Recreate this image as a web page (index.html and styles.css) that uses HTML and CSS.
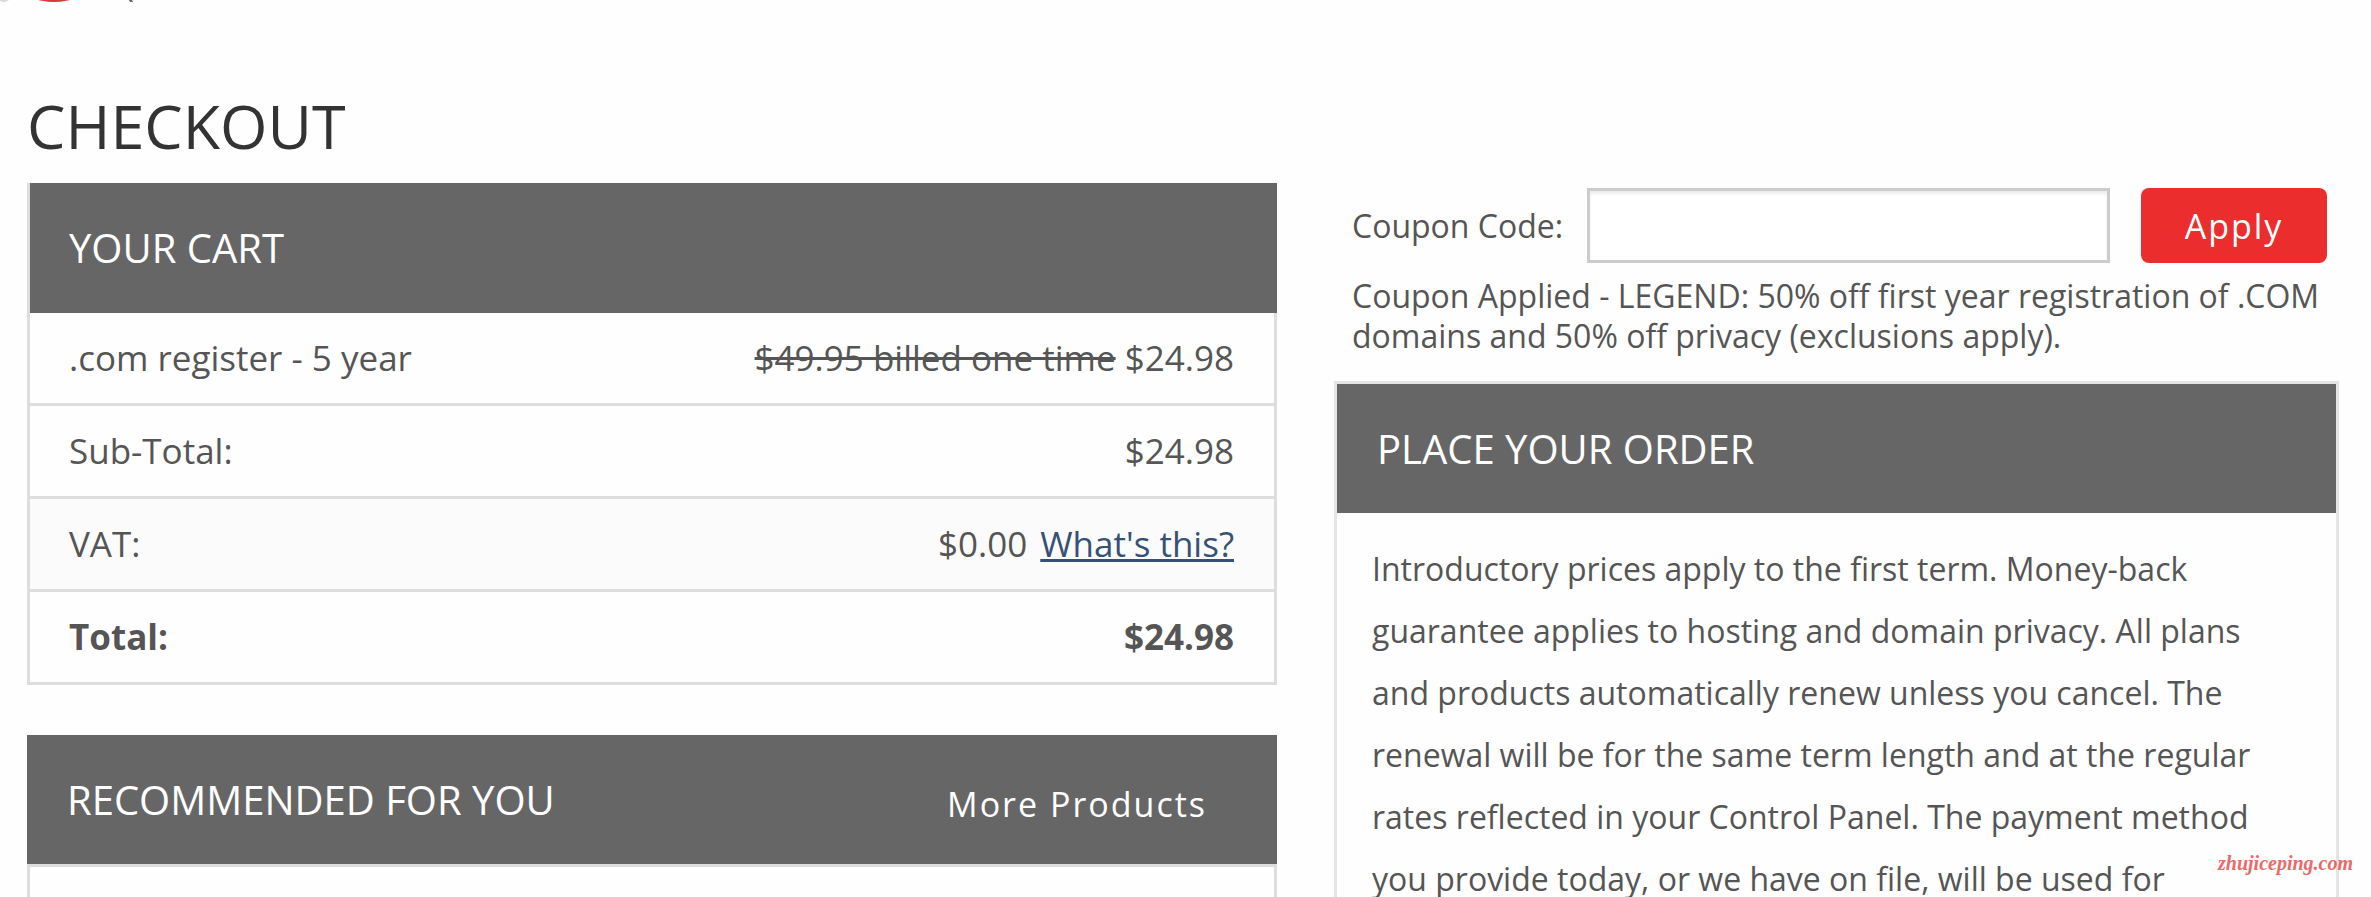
FILE: index.html
```html
<!DOCTYPE html>
<html lang="en">
<head>
<meta charset="utf-8">
<title>Checkout</title>
<link rel="stylesheet" href="styles.css">
</head>
<body>
<header class="site-header">
  <svg class="brand" width="140" height="16" viewBox="0 0 140 16" aria-hidden="true">
    <ellipse cx="4" cy="-3" rx="6" ry="5" fill="#d8d8d8"/>
    <ellipse cx="54" cy="-14" rx="32" ry="16" fill="#d9383d"/>
    <path d="M129 0h3l1 2h-3z" fill="#666"/>
  </svg>
</header>
<main class="page">
  <h1 class="title">CHECKOUT</h1>
  <div class="columns">
    <div class="main-column">
      <section class="cart">
        <h2 class="bar cart-bar">YOUR CART</h2>
        <table class="cart-table">
          <tbody>
            <tr><th scope="row">.com register - 5 year</th><td><s>$49.95 billed one time</s> $24.98</td></tr>
            <tr><th scope="row">Sub-Total:</th><td>$24.98</td></tr>
            <tr class="tinted"><th scope="row">VAT:</th><td>$0.00 <a class="help" href="#vat">What's this?</a></td></tr>
            <tr class="total"><th scope="row">Total:</th><td>$24.98</td></tr>
          </tbody>
        </table>
      </section>
      <section class="recommended">
        <div class="bar recommended-bar">
          <h2 class="bar-title">RECOMMENDED FOR YOU</h2>
          <a class="more" href="#products">More Products</a>
        </div>
        <div class="recommended-body"></div>
      </section>
    </div>
    <aside class="side-column">
      <form class="coupon">
        <div class="coupon-row">
          <label for="coupon">Coupon Code:</label>
          <input class="coupon-input" id="coupon" type="text">
          <button class="apply" type="button">Apply</button>
        </div>
        <p class="coupon-note">Coupon Applied - LEGEND: 50% off first year registration of .COM domains and 50% off privacy (exclusions apply).</p>
      </form>
      <section class="order">
        <h2 class="bar">PLACE YOUR ORDER</h2>
        <p class="terms">Introductory prices apply to the first term. Money-back guarantee applies to hosting and domain privacy. All plans and products automatically renew unless you cancel. The renewal will be for the same term length and at the regular rates reflected in your Control Panel. The payment method you provide today, or we have on file, will be used for</p>
      </section>
    </aside>
  </div>
</main>
<div class="watermark">zhujiceping.com</div>
</body>
</html>
```
FILE: styles.css
```css
* { box-sizing: border-box; }
body {
  margin: 0;
  height: 100vh;
  overflow: hidden;
  background: #fefefe;
  color: #555;
  font-family: "Open Sans", "Noto Sans", sans-serif;
  font-size: 35px;
}
.site-header { height: 84px; }
.brand { display: block; }
.page { padding: 0 32px 0 27px; }
.title {
  margin: 0 0 15px;
  font-size: 61px;
  font-weight: 400;
  line-height: 84px;
  color: #333;
}
.columns {
  display: grid;
  grid-template-columns: 1250fr 1005fr;
  column-gap: 57px;
  align-items: start;
}
.bar {
  margin: 0;
  padding: 0 40px;
  background: #666;
  color: #fff;
  font-size: 40px;
  font-weight: 400;
  line-height: 129px;
}
.cart {
  margin-bottom: 50px;
  border: 3px solid #ddd;
  border-top: 0;
}
.cart-bar { margin-right: -3px; padding: 0 39px; line-height: 130px; }
.cart-table { width: 100%; border-collapse: separate; border-spacing: 0; }
.cart-table th,
.cart-table td {
  height: 93px;
  padding: 0 40px 2px 39px;
  border-bottom: 3px solid #ddd;
  font-weight: 400;
  text-align: left;
}
.cart-table td { text-align: right; }
.cart-table .tinted { background: #fbfbfb; }
.cart-table .total th,
.cart-table .total td { height: 90px; border-bottom: 0; font-weight: 700; }
.help { margin-left: 4px; color: #375175; }
.recommended-bar { display: flex; align-items: center; justify-content: space-between; padding-right: 70px; }
.bar-title { margin: 0; font-size: 40px; font-weight: 400; }
.more {
  padding-top: 8px;
  color: #fff;
  font-size: 34px;
  line-height: 48px;
  letter-spacing: 2px;
  text-decoration: none;
}
.recommended-body { height: 33px; border: 3px solid #ddd; border-bottom: 0; }
.coupon { padding: 5px 0 0 18px; }
.coupon-row { display: flex; align-items: center; padding-right: 12px; }
.coupon-input {
  flex: 1;
  min-width: 0;
  height: 75px;
  margin: 0 31px 0 24px;
  padding: 0 16px;
  border: 3px solid #ccc;
  background: #fff;
  box-shadow: inset 0 3px 3px #eee;
  font: inherit;
}
.apply {
  width: 186px;
  height: 75px;
  border: 0;
  border-radius: 8px;
  background: #eb2d2e;
  color: #fff;
  font-family: inherit;
  font-size: 34px;
  font-weight: 500;
  letter-spacing: 2px;
}
.coupon-note { margin: 13px 0 25px; font-size: 32px; line-height: 40px; }
.coupon-row label { font-size: 32px; }
.order { border: 3px solid #e4e4e4; border-bottom: 0; }
.terms { margin: 0; padding: 25px 60px 0 35px; font-size: 32px; line-height: 62px; }
.watermark {
  position: absolute;
  right: 18px;
  bottom: 22px;
  color: #e96a6a;
  font: italic 700 20px "Liberation Serif", serif;
}
```
